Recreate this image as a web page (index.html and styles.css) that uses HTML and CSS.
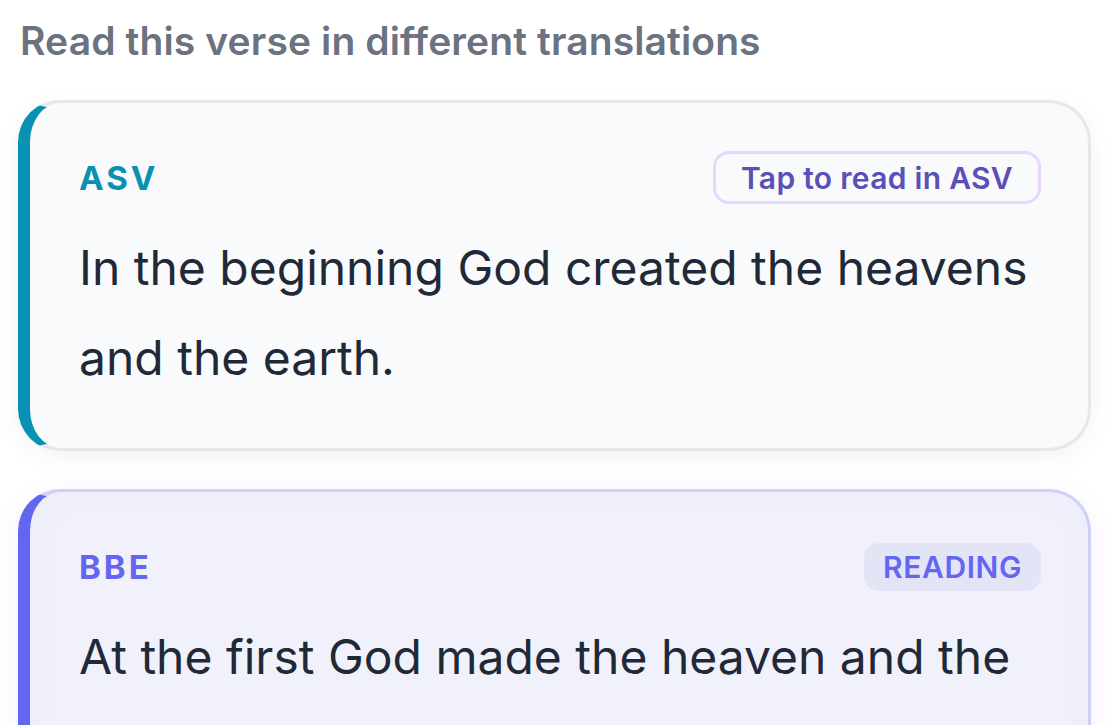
FILE: index.html
```html
<!DOCTYPE html>
<html lang="en">
<head>
<meta charset="utf-8">
<title>Translations</title>
<link rel="stylesheet" href="styles.css">
</head>
<body>
<div class="page">
  <h2 class="title">Read this verse in different translations</h2>
  <div class="list">
    <div class="card">
      <div class="card-head">
        <span class="code code-asv">ASV</span>
        <span class="tap">Tap to read in ASV</span>
      </div>
      <p class="verse">In the beginning God created the heavens and the earth.</p>
    </div>
    <div class="card card-active">
      <div class="card-head">
        <span class="code code-bbe">BBE</span>
        <span class="reading">READING</span>
      </div>
      <p class="verse">At the first God made the heaven and the earth.</p>
    </div>
  </div>
</div>
</body>
</html>
```
FILE: styles.css
```css
* { box-sizing: border-box; }
html, body { margin: 0; padding: 0; background: #ffffff; }
body { font-family: Inter, "Noto Sans", sans-serif; overflow: hidden; }
.page { padding: 12px 19px 0 18px; }
.title {
  margin: 0 0 30px 2px;
  font-size: 39px;
  line-height: 58px;
  font-weight: 600;
  color: #6b7280;
  letter-spacing: 0.12px;
}
.list { display: flex; flex-direction: column; gap: 38px; }
.card {
  background: #f9fafb;
  border: 3px solid #e5e7eb;
  border-left: 12px solid #0891b2;
  border-radius: 42px;
  padding: 48px 47px 48px 49px;
  box-shadow: 0 6px 24px rgba(17, 24, 39, 0.05);
}
.card-active {
  background: #f1f1fb;
  border-color: #cfd0f8;
  border-left-color: #6366f1;
  box-shadow: 0 6px 28px rgba(99, 102, 241, 0.08), inset 0 0 40px rgba(99, 102, 241, 0.03);
}
.card-head {
  display: flex;
  align-items: center;
  justify-content: space-between;
  height: 53px;
}
.code {
  font-size: 33px;
  font-weight: 700;
  letter-spacing: 3px;
}
.code-asv { color: #0891b2; }
.code-bbe { color: #6366f1; }
.tap {
  border: 3px solid #e9d5ff;
  border-radius: 16px;
  padding: 0 25px;
  height: 53px;
  display: flex;
  align-items: center;
  font-size: 30px;
  font-weight: 600;
  color: #5b4fb8;
  letter-spacing: 0.3px;
}
.reading {
  background: #e4e4f7;
  border-radius: 15px;
  padding: 0 19px;
  height: 48px;
  display: flex;
  align-items: center;
  font-size: 30px;
  font-weight: 600;
  color: #6366f1;
  letter-spacing: 0.6px;
}
.verse {
  margin: 19px 0 -3px 0;
  font-size: 48px;
  line-height: 90px;
  color: #1f2937;
  font-weight: 400;
}
```
